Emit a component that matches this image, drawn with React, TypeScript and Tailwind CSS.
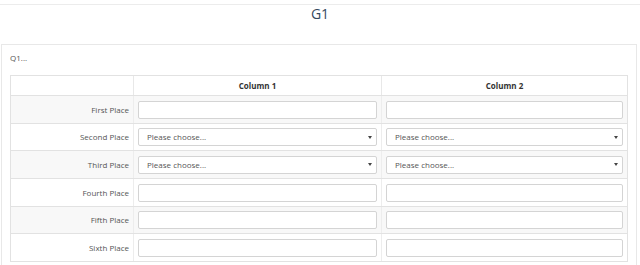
const rows: Array<{ label: string; kind: 'text' | 'select' }> = [
  { label: 'First Place', kind: 'text' },
  { label: 'Second Place', kind: 'select' },
  { label: 'Third Place', kind: 'select' },
  { label: 'Fourth Place', kind: 'text' },
  { label: 'Fifth Place', kind: 'text' },
  { label: 'Sixth Place', kind: 'text' },
]

// first row has no top border, the rest carry a 1px border-t inside their height
const rowHeights = ['h-[27px]', 'h-[27px]', 'h-[28px]', 'h-[28px]', 'h-[27px]', 'h-[28px]']

function Field({ kind }: { kind: 'text' | 'select' }) {
  if (kind === 'select') {
    return (
      <div className="flex h-[18px] w-full items-center justify-between rounded-[2px] border border-[#d4d4d4] bg-white pl-[8px] pr-[4px]">
        <span className="text-[8px] leading-none text-[#555]">Please choose...</span>
        <span className="block h-0 w-0 border-x-[2.5px] border-t-[3px] border-x-transparent border-t-[#444]" />
      </div>
    )
  }
  return <div className="h-[18px] w-full rounded-[2px] border border-[#d4d4d4] bg-white" />
}

export default function App() {
  return (
    <div className="h-[265px] w-[640px] overflow-hidden bg-white font-['Open_Sans',sans-serif]">
      <div className="h-[5px] border-b border-[#ececec]" />
      <div className="pt-[1px] text-center text-[14px] leading-[16px] text-[#34495e]">G1</div>

      <div className="ml-[1px] mt-[22px] w-[636px] border border-[#e8e8e8] px-[8px] pt-[6px] pb-4">
        <div className="text-[8px] leading-[14px] text-[#555]">Q1...</div>

        <div className="mt-[10px] w-[618px] border border-[#e2e2e2]">
          <div className="flex h-[20px] border-b border-[#e2e2e2] text-[8px] font-bold text-[#333]">
            <div className="w-[123px] border-r border-[#e8e8e8]" />
            <div className="flex w-[248px] items-center justify-center border-r border-[#e8e8e8]">Column 1</div>
            <div className="flex flex-1 items-center justify-center">Column 2</div>
          </div>

          {rows.map((row, i) => (
            <div
              key={row.label}
              className={`flex ${rowHeights[i]} ${i > 0 ? 'border-t border-[#e2e2e2]' : ''} ${i % 2 === 0 ? 'bg-[#f8f8f8]' : 'bg-white'}`}
            >
              <div className="flex w-[123px] items-center justify-end border-r border-[#ededed] pr-[4px] text-[8px] text-[#555]">
                {row.label}
              </div>
              <div className="flex w-[248px] items-center border-r border-[#ededed] px-[4px]">
                <Field kind={row.kind} />
              </div>
              <div className="flex flex-1 items-center px-[4px]">
                <Field kind={row.kind} />
              </div>
            </div>
          ))}
        </div>
      </div>
    </div>
  )
}
